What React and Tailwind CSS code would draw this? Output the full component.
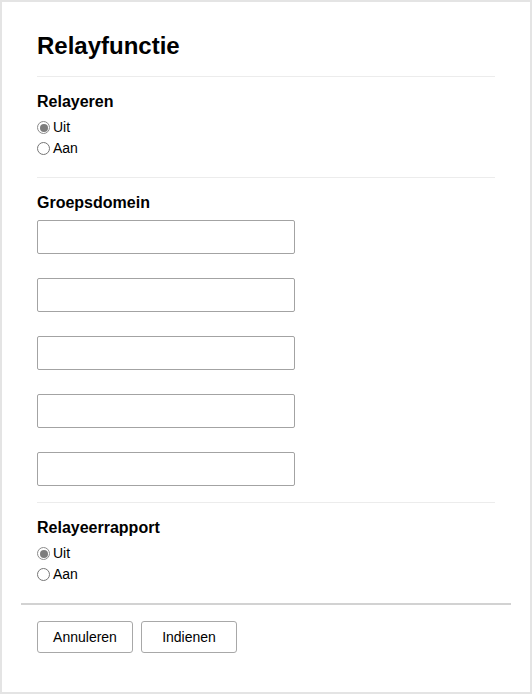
import { useState } from 'react'

function Radio({ name, checked, label, onChange }) {
  return (
    <label className="flex items-center h-[21px] text-[14px] text-black cursor-pointer">
      <input type="radio" name={name} checked={checked} onChange={onChange} className="sr-only" />
      <span className={`w-[13px] h-[13px] rounded-full border flex items-center justify-center mr-[3px] ${checked ? 'border-[#8c8c8c]' : 'border-[#767676]'}`}>
        {checked && <span className="w-[8px] h-[8px] rounded-full bg-[#7d7d7d]" />}
      </span>
      <span>{label}</span>
    </label>
  )
}

function Section({ title, children }) {
  return (
    <div>
      <h2 className="text-[16px] font-bold leading-[19px] mb-[6px]">{title}</h2>
      {children}
    </div>
  )
}

export default function App() {
  const [relay, setRelay] = useState('uit')
  const [report, setReport] = useState('uit')
  const [domains, setDomains] = useState(['', '', '', '', ''])

  return (
    <div className="w-[532px] h-[694px] border-2 border-[#e4e4e4] bg-white text-black" style={{ fontFamily: '"Liberation Sans", Arial, sans-serif' }}>
      <div className="px-[35px]">
        <h1 className="text-[24px] font-bold leading-[28px] pt-[30px] pb-[16px]">Relayfunctie</h1>
        <hr className="border-0 border-t border-[#ececec] w-[458px]" />

        {/* Relayeren */}
        <div className="pt-[15px] pb-[18px]">
          <Section title="Relayeren">
            <Radio name="relay" label="Uit" checked={relay === 'uit'} onChange={() => setRelay('uit')} />
            <Radio name="relay" label="Aan" checked={relay === 'aan'} onChange={() => setRelay('aan')} />
          </Section>
        </div>
        <hr className="border-0 border-t border-[#ececec] w-[458px]" />

        {/* Groepsdomein */}
        <div className="pt-[15px] pb-[16px]">
          <h2 className="text-[16px] font-bold leading-[19px] mb-[8px]">Groepsdomein</h2>
          <div className="flex flex-col gap-[24px]">
            {domains.map((d, i) => (
              <input
                key={i}
                value={d}
                onChange={e => setDomains(domains.map((v, j) => (j === i ? e.target.value : v)))}
                className="w-[258px] h-[34px] border border-[#a3a3a3] rounded-[2px] px-2 text-[14px] outline-none"
              />
            ))}
          </div>
        </div>
        <hr className="border-0 border-t border-[#ececec] w-[458px]" />

        {/* Relayeerrapport */}
        <div className="pt-[15px] pb-[18px]">
          <Section title="Relayeerrapport">
            <Radio name="report" label="Uit" checked={report === 'uit'} onChange={() => setReport('uit')} />
            <Radio name="report" label="Aan" checked={report === 'aan'} onChange={() => setReport('aan')} />
          </Section>
        </div>
      </div>

      {/* Footer */}
      <div className="mx-[19px] border-t-2 border-[#d2d2d2]" />
      <div className="px-[35px] pt-[16px] flex gap-[8px]">
        <button className="w-[96px] h-[32px] border border-[#a8a8a8] rounded-[3px] bg-white text-[14px] text-black">Annuleren</button>
        <button className="w-[96px] h-[32px] border border-[#a8a8a8] rounded-[3px] bg-white text-[14px] text-black">Indienen</button>
      </div>
    </div>
  )
}
